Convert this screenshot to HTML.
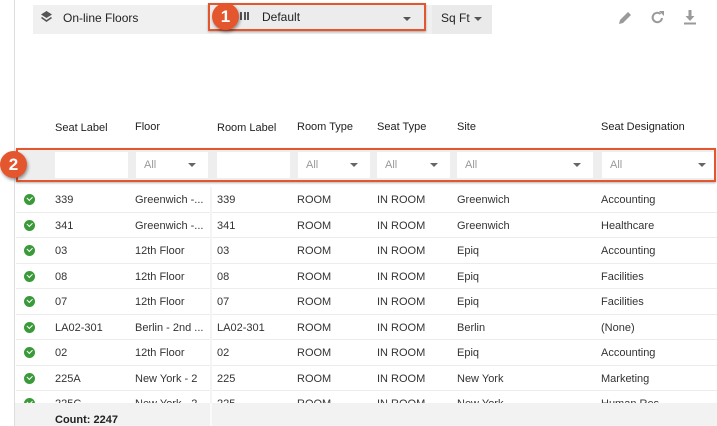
<!DOCTYPE html>
<html><head><style>
*{margin:0;padding:0;box-sizing:border-box}
body{width:717px;height:426px;background:#fff;font-family:"Liberation Sans",sans-serif;font-size:11px;color:#333;position:relative;overflow:hidden}
.a{position:absolute}
.tb{left:33px;top:5px;width:459px;height:29px;background:#f0f0f0}
.hd{top:121px;font-size:11px;color:#222}
.row{position:relative;width:701px;height:25.5px;border-bottom:1px solid #ececec}
.row span{position:absolute;top:7px;white-space:nowrap}
.ck{position:absolute;left:8px;top:7px;width:11px;height:11px;border-radius:50%;background:#3a9a3a}
.ck:after{content:"";position:absolute;left:3px;top:2px;width:4px;height:2.5px;border-left:1.5px solid #fff;border-bottom:1.5px solid #fff;transform:rotate(-45deg)}
.fi{top:152px;height:26px;background:#fff;color:#999;font-size:11px}
.fi i{position:absolute;right:12px;top:11px;border:4px solid transparent;border-top:4px solid #666;border-bottom:0}
.fi b{font-weight:normal;position:absolute;left:8px;top:7px}
.circ{width:27px;height:27px;border-radius:50%;background:#e4572e;color:#fff;font-weight:bold;font-size:17px;text-align:center;line-height:27px;box-shadow:1px 2px 3px rgba(0,0,0,.4)}
</style></head><body>
<div class="a" style="left:14px;top:0;width:1px;height:426px;background:#ddd"></div>
<div class="a tb"></div>
<svg class="a" style="left:40px;top:10px" width="13" height="14" viewBox="0 0 13 14"><path d="M6.5 1L12 4.5 6.5 8 1 4.5z" fill="#555"/><path d="M1.5 7.5L6.5 11 11.5 7.5" fill="none" stroke="#555" stroke-width="1.6"/></svg>
<div class="a" style="left:63px;top:11px;font-size:12px;color:#222">On-line Floors</div>
<div class="a" style="left:432px;top:5px;width:60px;height:29px;background:#eaeaea"></div>
<div class="a" style="left:441px;top:11px;font-size:12px;color:#222">Sq Ft</div>
<div class="a" style="left:474px;top:17px;border:4px solid transparent;border-top:4px solid #555;border-bottom:0"></div>
<div class="a" style="left:208px;top:3px;width:218px;height:28px;border:2px solid #e4572e;background:#ececec;box-shadow:0 1px 2px rgba(0,0,0,.3)"></div>
<div class="a" style="left:240px;top:12px;width:9px;height:8px;border-left:2px solid #555;border-right:2px solid #555"></div>
<div class="a" style="left:243.5px;top:12px;width:2px;height:8px;background:#555"></div>
<div class="a" style="left:262px;top:10px;font-size:12px;color:#222">Default</div>
<div class="a" style="left:403px;top:17px;border:4px solid transparent;border-top:4px solid #555;border-bottom:0"></div>
<div class="a circ" style="left:212px;top:3px">1</div>
<svg class="a" style="left:617px;top:10px" width="16" height="16" viewBox="0 0 16 16"><path d="M2 14l1-4 8-8 3 3-8 8z" fill="#9a9a9a"/></svg>
<svg class="a" style="left:650px;top:10px" width="15" height="15" viewBox="0 0 15 15"><path d="M12 8A4.7 4.7 0 1 1 10.5 4" fill="none" stroke="#9a9a9a" stroke-width="2"/><path d="M9 1h5v5z" fill="#9a9a9a"/></svg>
<svg class="a" style="left:683px;top:9px" width="14" height="16" viewBox="0 0 14 16"><path d="M5.5 1h3v6h3L7 12 2.5 7h3z" fill="#9a9a9a"/><rect x="1" y="13.5" width="12" height="2" fill="#9a9a9a"/></svg>

<div class="a hd" style="left:55px;top:122px">Seat Label</div>
<div class="a hd" style="left:135px">Floor</div>
<div class="a hd" style="left:217px;top:122px">Room Label</div>
<div class="a hd" style="left:297px">Room Type</div>
<div class="a hd" style="left:377px">Seat Type</div>
<div class="a hd" style="left:457px">Site</div>
<div class="a hd" style="left:601px">Seat Designation</div>

<div class="a" style="left:16px;top:148px;width:700px;height:34px;background:#eeeeee;border:2px solid #e4572e;box-shadow:0 1px 2px rgba(0,0,0,.3)"></div>
<div class="a fi" style="left:55px;width:73px"></div>
<div class="a fi" style="left:136px;width:72px"><b>All</b><i></i></div>
<div class="a fi" style="left:217px;width:73px"></div>
<div class="a fi" style="left:298px;width:72px"><b>All</b><i></i></div>
<div class="a fi" style="left:377px;width:73px"><b>All</b><i></i></div>
<div class="a fi" style="left:457px;width:136px"><b>All</b><i></i></div>
<div class="a fi" style="left:602px;width:112px"><b>All</b><i style="right:8px"></i></div>
<div class="a circ" style="left:0px;top:151px">2</div>

<div class="a" style="left:16px;top:187px;width:701px">
<div class="row"><div class="ck"></div><span style="left:39px">339</span><span style="left:119px">Greenwich -...</span><span style="left:201px">339</span><span style="left:281px">ROOM</span><span style="left:361px">IN ROOM</span><span style="left:441px">Greenwich</span><span style="left:585px">Accounting</span></div>
<div class="row"><div class="ck"></div><span style="left:39px">341</span><span style="left:119px">Greenwich -...</span><span style="left:201px">341</span><span style="left:281px">ROOM</span><span style="left:361px">IN ROOM</span><span style="left:441px">Greenwich</span><span style="left:585px">Healthcare</span></div>
<div class="row"><div class="ck"></div><span style="left:39px">03</span><span style="left:119px">12th Floor</span><span style="left:201px">03</span><span style="left:281px">ROOM</span><span style="left:361px">IN ROOM</span><span style="left:441px">Epiq</span><span style="left:585px">Accounting</span></div>
<div class="row"><div class="ck"></div><span style="left:39px">08</span><span style="left:119px">12th Floor</span><span style="left:201px">08</span><span style="left:281px">ROOM</span><span style="left:361px">IN ROOM</span><span style="left:441px">Epiq</span><span style="left:585px">Facilities</span></div>
<div class="row"><div class="ck"></div><span style="left:39px">07</span><span style="left:119px">12th Floor</span><span style="left:201px">07</span><span style="left:281px">ROOM</span><span style="left:361px">IN ROOM</span><span style="left:441px">Epiq</span><span style="left:585px">Facilities</span></div>
<div class="row"><div class="ck"></div><span style="left:39px">LA02-301</span><span style="left:119px">Berlin - 2nd ...</span><span style="left:201px">LA02-301</span><span style="left:281px">ROOM</span><span style="left:361px">IN ROOM</span><span style="left:441px">Berlin</span><span style="left:585px">(None)</span></div>
<div class="row"><div class="ck"></div><span style="left:39px">02</span><span style="left:119px">12th Floor</span><span style="left:201px">02</span><span style="left:281px">ROOM</span><span style="left:361px">IN ROOM</span><span style="left:441px">Epiq</span><span style="left:585px">Accounting</span></div>
<div class="row"><div class="ck"></div><span style="left:39px">225A</span><span style="left:119px">New York - 2</span><span style="left:201px">225</span><span style="left:281px">ROOM</span><span style="left:361px">IN ROOM</span><span style="left:441px">New York</span><span style="left:585px">Marketing</span></div>
<div class="row"><div class="ck"></div><span style="left:39px">225C</span><span style="left:119px">New York - 2</span><span style="left:201px">225</span><span style="left:281px">ROOM</span><span style="left:361px">IN ROOM</span><span style="left:441px">New York</span><span style="left:585px">Human Res</span></div>
</div>
<div class="a" style="left:210px;top:187px;width:2px;height:216px;background:#f4f4f4"></div>
<div class="a" style="left:15px;top:403px;width:702px;height:23px;background:#f2f2f2"></div>
<div class="a" style="left:210px;top:403px;width:2px;height:23px;background:#fafafa"></div>
<div class="a" style="left:55px;top:414px;font-weight:bold;font-size:11px;color:#222">Count: 2247</div>
</body></html>
